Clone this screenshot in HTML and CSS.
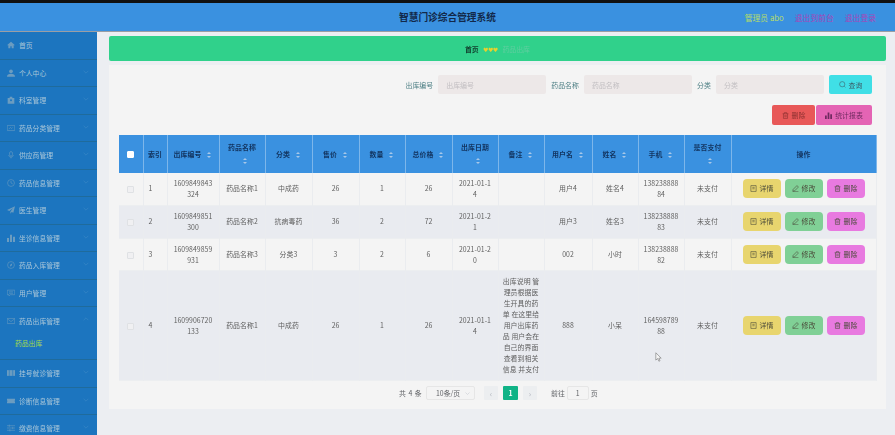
FILE: index.html
```html
<!DOCTYPE html>
<html lang="zh-CN">
<head>
<meta charset="utf-8">
<title>智慧门诊综合管理系统</title>
<link rel="stylesheet" href="styles.css">
</head>
<body>
<svg class="sprite" aria-hidden="true">
  <symbol id="i-chev" viewBox="0 0 10 6"><path d="M1 1l4 4 4-4" fill="none" stroke="currentColor" stroke-width="1"/></symbol>
  <symbol id="i-home" viewBox="0 0 12 12"><path d="M6 1L0 6.500h2V11h3V8h2v3h3V6.500h2z" fill="currentColor"/></symbol>
  <symbol id="i-user" viewBox="0 0 12 12"><circle cx="6" cy="3.500" r="2.800" fill="currentColor"/><path d="M0 11.500c0-3.500 2.500-4.500 6-4.500s6 1 6 4.500z" fill="currentColor"/></symbol>
  <symbol id="i-case" viewBox="0 0 12 12"><path d="M1 3h3V1h4v2h3v8.500H1z" fill="currentColor"/><circle cx="6" cy="6.500" r="1.500" fill="#1c75bf"/></symbol>
  <symbol id="i-pic" viewBox="0 0 14 12"><path d="M.5 1.500h13v9H.5zM3 8l3-3 2 2 2-2" fill="none" stroke="currentColor"/></symbol>
  <symbol id="i-mic" viewBox="0 0 12 14"><rect x="3.500" y="1" width="5" height="8" rx="2.500" fill="none" stroke="currentColor"/><path d="M6 10v3M2 7c0 5 8 5 8 0" fill="none" stroke="currentColor"/></symbol>
  <symbol id="i-clock" viewBox="0 0 14 14"><circle cx="7" cy="7" r="6" fill="none" stroke="currentColor"/><path d="M7 3.500V7l3 1.500" fill="none" stroke="currentColor"/></symbol>
  <symbol id="i-send" viewBox="0 0 12 12"><path d="M12 .5L0 6l3.500 1.500L9 3 5 8.500v3L7 9l2.500 1z" fill="currentColor"/></symbol>
  <symbol id="i-bars" viewBox="0 0 12 12"><path d="M0 6h3v6H0zM4.500 1h3v11h-3zM9 4h3v8H9z" fill="currentColor"/></symbol>
  <symbol id="i-compass" viewBox="0 0 14 14"><circle cx="7" cy="7" r="6" fill="none" stroke="currentColor"/><path d="M9.500 4L8 8 5 10l1-4z" fill="currentColor"/></symbol>
  <symbol id="i-chat" viewBox="0 0 14 12"><path d="M.5 1h13v8H6L3.500 11V9h-3zM3.500 4h7M3.500 6.500h7" fill="none" stroke="currentColor"/></symbol>
  <symbol id="i-mail" viewBox="0 0 14 12"><path d="M.5 1.500h13v9H.5zM.5 2L7 7l6.500-5" fill="none" stroke="currentColor"/></symbol>
  <symbol id="i-film" viewBox="0 0 14 12"><path d="M0 1h14v10H0z" fill="currentColor"/><path d="M4 1v10M10 1v10" stroke="#1c75bf"/></symbol>
  <symbol id="i-ticket" viewBox="0 0 14 12"><path d="M0 2h14v3a1 1 0 0 0 0 2v3H0V7a1 1 0 0 0 0-2z" fill="currentColor"/></symbol>
  <symbol id="i-sliders" viewBox="0 0 14 12"><path d="M0 2h14M0 6h14M0 10h14M4 0v4M10 4v4M5 8v4" fill="none" stroke="currentColor"/></symbol>
  <symbol id="i-search" viewBox="0 0 12 12"><circle cx="5.500" cy="5.500" r="4.500" fill="none" stroke="currentColor"/><path d="M9 9l2 2" stroke="currentColor"/></symbol>
  <symbol id="i-trash" viewBox="0 0 12 12"><path d="M1 3h10M4 3V1h4v2M2.500 3v8h7V3M5 5v4M7 5v4" fill="none" stroke="currentColor"/></symbol>
  <symbol id="i-doc" viewBox="0 0 12 12"><path d="M1.500 1h9v10h-9zM4 4h4M4 6.500h4" fill="none" stroke="currentColor"/></symbol>
  <symbol id="i-pen" viewBox="0 0 12 12"><path d="M8.500 1L11 3.500 4.500 10 1.500 10.500 2 7.500zM1 11.500h10" fill="none" stroke="currentColor"/></symbol>
</svg>
<div class="app">
  <header class="topbar">
    <span></span>
    <h1 class="title">智慧门诊综合管理系统</h1>
    <div class="top-links">
      <span class="admin">管理员 abo</span>
      <a class="top-link">退出到前台</a>
      <a class="top-link">退出登录</a>
    </div>
  </header>
  <div class="body-row">
    <nav class="sidebar">
      <div class="nav-item"><svg class="nav-icon"><use href="#i-home"/></svg><span>首页</span></div>
      <div class="nav-item"><svg class="nav-icon"><use href="#i-user"/></svg><span>个人中心</span><svg class="chev"><use href="#i-chev"/></svg></div>
      <div class="nav-item"><svg class="nav-icon"><use href="#i-case"/></svg><span>科室管理</span><svg class="chev"><use href="#i-chev"/></svg></div>
      <div class="nav-item"><svg class="nav-icon"><use href="#i-pic"/></svg><span>药品分类管理</span><svg class="chev"><use href="#i-chev"/></svg></div>
      <div class="nav-item"><svg class="nav-icon"><use href="#i-mic"/></svg><span>供应商管理</span><svg class="chev"><use href="#i-chev"/></svg></div>
      <div class="nav-item"><svg class="nav-icon"><use href="#i-clock"/></svg><span>药品信息管理</span><svg class="chev"><use href="#i-chev"/></svg></div>
      <div class="nav-item"><svg class="nav-icon"><use href="#i-send"/></svg><span>医生管理</span><svg class="chev"><use href="#i-chev"/></svg></div>
      <div class="nav-item"><svg class="nav-icon"><use href="#i-bars"/></svg><span>坐诊信息管理</span><svg class="chev"><use href="#i-chev"/></svg></div>
      <div class="nav-item"><svg class="nav-icon"><use href="#i-compass"/></svg><span>药品入库管理</span><svg class="chev"><use href="#i-chev"/></svg></div>
      <div class="nav-item"><svg class="nav-icon"><use href="#i-chat"/></svg><span>用户管理</span><svg class="chev"><use href="#i-chev"/></svg></div>
      <div class="nav-group">
        <div class="nav-item nav-open"><svg class="nav-icon"><use href="#i-mail"/></svg><span>药品出库管理</span><svg class="chev chev-up"><use href="#i-chev"/></svg></div>
        <div class="nav-sub">药品出库</div>
      </div>
      <div class="nav-item"><svg class="nav-icon"><use href="#i-film"/></svg><span>挂号就诊管理</span><svg class="chev"><use href="#i-chev"/></svg></div>
      <div class="nav-item"><svg class="nav-icon"><use href="#i-ticket"/></svg><span>诊断信息管理</span><svg class="chev"><use href="#i-chev"/></svg></div>
      <div class="nav-item"><svg class="nav-icon"><use href="#i-sliders"/></svg><span>缴费信息管理</span><svg class="chev"><use href="#i-chev"/></svg></div>
    </nav>
    <main class="main">
      <div class="crumb">
        <b class="crumb-home">首页</b>
        <span class="hearts">♥♥♥</span>
        <span class="crumb-cur">药品出库</span>
      </div>
      <section class="card">
        <form class="search">
          <label class="s-label">出库编号</label><input class="s-input" placeholder="出库编号">
          <label class="s-label">药品名称</label><input class="s-input" placeholder="药品名称">
          <label class="s-label">分类</label><input class="s-input" placeholder="分类">
          <button type="button" class="btn btn-query"><svg class="b-icon"><use href="#i-search"/></svg>查询</button>
        </form>
        <div class="actions">
          <button type="button" class="btn btn-del"><svg class="b-icon"><use href="#i-trash"/></svg>删除</button>
          <button type="button" class="btn btn-stat"><svg class="b-icon"><use href="#i-bars"/></svg>统计报表</button>
        </div>
        <table class="grid">
          <colgroup>
            <col class="w24"><col class="w24"><col class="w52"><col class="w46"><col class="w47"><col class="w47"><col class="w46"><col class="w47"><col class="w46"><col class="w46"><col class="w48"><col class="w46"><col class="w46"><col class="w47"><col class="w145">
          </colgroup>
          <thead>
            <tr>
              <th class="tight"><span class="cbx cbx-on"></span></th>
              <th class="tight">索引</th>
              <th>出库编号<i class="sort"></i></th>
              <th>药品名称<i class="sort"></i></th>
              <th>分类<i class="sort"></i></th>
              <th>售价<i class="sort"></i></th>
              <th>数量<i class="sort"></i></th>
              <th>总价格<i class="sort"></i></th>
              <th>出库日期<i class="sort"></i></th>
              <th>备注<i class="sort"></i></th>
              <th>用户名<i class="sort"></i></th>
              <th>姓名<i class="sort"></i></th>
              <th>手机<i class="sort"></i></th>
              <th>是否支付<i class="sort"></i></th>
              <th>操作</th>
            </tr>
          </thead>
          <tbody>
            <tr>
              <td class="tight"><span class="cbx"></span></td><td class="idx">1</td><td>1609849843324</td><td>药品名称1</td><td>中成药</td><td>26</td><td>1</td><td>26</td><td>2021-01-14</td><td></td><td>用户4</td><td>姓名4</td><td>13823888884</td><td>未支付</td>
              <td><div class="ops"><button type="button" class="op op-view"><svg class="b-icon"><use href="#i-doc"/></svg>详情</button><button type="button" class="op op-edit"><svg class="b-icon"><use href="#i-pen"/></svg>修改</button><button type="button" class="op op-del"><svg class="b-icon"><use href="#i-trash"/></svg>删除</button></div></td>
            </tr>
            <tr>
              <td class="tight"><span class="cbx"></span></td><td class="idx">2</td><td>1609849851300</td><td>药品名称2</td><td>抗病毒药</td><td>36</td><td>2</td><td>72</td><td>2021-01-21</td><td></td><td>用户3</td><td>姓名3</td><td>13823888883</td><td>未支付</td>
              <td><div class="ops"><button type="button" class="op op-view"><svg class="b-icon"><use href="#i-doc"/></svg>详情</button><button type="button" class="op op-edit"><svg class="b-icon"><use href="#i-pen"/></svg>修改</button><button type="button" class="op op-del"><svg class="b-icon"><use href="#i-trash"/></svg>删除</button></div></td>
            </tr>
            <tr>
              <td class="tight"><span class="cbx"></span></td><td class="idx">3</td><td>1609849859931</td><td>药品名称3</td><td>分类3</td><td>3</td><td>2</td><td>6</td><td>2021-01-20</td><td></td><td>002</td><td>小时</td><td>13823888882</td><td>未支付</td>
              <td><div class="ops"><button type="button" class="op op-view"><svg class="b-icon"><use href="#i-doc"/></svg>详情</button><button type="button" class="op op-edit"><svg class="b-icon"><use href="#i-pen"/></svg>修改</button><button type="button" class="op op-del"><svg class="b-icon"><use href="#i-trash"/></svg>删除</button></div></td>
            </tr>
            <tr>
              <td class="tight"><span class="cbx"></span></td><td class="idx">4</td><td>1609906720133</td><td>药品名称1</td><td>中成药</td><td>26</td><td>1</td><td>26</td><td>2021-01-14</td><td class="note">出库说明 管理员根据医生开具的药单 在这里给用户出库药品 用户会在自己的界面查看到相关信息 并支付</td><td>888</td><td>小呆</td><td>16459878988</td><td>未支付</td>
              <td><div class="ops"><button type="button" class="op op-view"><svg class="b-icon"><use href="#i-doc"/></svg>详情</button><button type="button" class="op op-edit"><svg class="b-icon"><use href="#i-pen"/></svg>修改</button><button type="button" class="op op-del"><svg class="b-icon"><use href="#i-trash"/></svg>删除</button></div></td>
            </tr>
          </tbody>
        </table>
        <div class="pager">
          <span class="total">共 4 条</span>
          <span class="size">10条/页<svg class="size-chev"><use href="#i-chev"/></svg></span>
          <span class="page page-off">‹</span>
          <span class="page page-on">1</span>
          <span class="page page-off">›</span>
          <span class="goto">前往</span>
          <span class="goto-box">1</span>
          <span class="goto-end">页</span>
        </div>
      </section>
    </main>
  </div>
  <svg class="cursor" viewBox="0 0 9 13"><path d="M1 1v9.500l2.500-2 1.500 3.500 1.500-.7L5 8h3z" fill="#f4f4f4" stroke="#777" stroke-width=".8"/></svg>
</div>
</body>
</html>
```

FILE: styles.css
```css
* { box-sizing: border-box; }
html, body { margin: 0; height: 100%; overflow: hidden; background: #eceef2; }
body { font-family: "Noto Sans CJK SC", "Noto Sans", sans-serif; font-size: 6.9px; color: #666; }
.sprite { position: absolute; width: 0; height: 0; }
.app { height: 435px; display: flex; flex-direction: column; border-top: 3px solid #111; filter: blur(.5px); }

.topbar { height: 29px; flex: none; display: grid; grid-template-columns: 1fr auto 1fr; align-items: center; background: #3a91e0; border-bottom: 1px solid #9a9ea4; padding: 0 19px; }
.title { margin: 0; font-size: 9.700px; font-weight: 700; color: #12294a; }
.top-links { display: flex; justify-content: flex-end; gap: 11px; font-size: 7.800px; }
.admin { color: #b6dc68; }
.top-link { color: #a646b8; }

.body-row { flex: 1; display: flex; min-height: 0; }
.sidebar { width: 97px; flex: none; background: #1c75bf; overflow: hidden; color: #a9c6d8; font-size: 6.800px; }
.nav-item { height: 27.500px; display: flex; align-items: center; padding-left: 7px; border-bottom: 1px solid #1f6b9c; position: relative; }
.nav-open { border-bottom: 0; }
.nav-group { border-bottom: 1px solid #1f6b9c; }
.nav-icon { width: 8px; height: 8px; margin-right: 4px; color: #6b9cc0; flex: none; }
.chev { position: absolute; right: 8px; top: 10px; width: 6px; height: 4px; color: #3f8cc8; }
.chev-up { transform: rotate(180deg); }
.nav-sub { height: 24.500px; padding: 3px 0 0 15px; color: #a6d94e; }

.main { flex: 1; min-width: 0; padding: 4px 9px 0 12px; }
.crumb { height: 25px; background: #30d18b; border-radius: 2px; display: flex; align-items: center; justify-content: center; gap: 4.500px; }
.crumb-home { color: #12402f; }
.hearts { color: #e9d22c; font-size: 5px; letter-spacing: -.1px; }
.crumb-cur { color: #5fce9f; }

.card { margin-top: 4px; height: 344px; background: #f4f4f4; padding: 10px 10px 0; }
.search { display: flex; justify-content: flex-end; align-items: center; padding-right: 4px; height: 19px; }
.s-label { color: #4d7f84; margin-right: 5.200px; }
.s-input { width: 108px; height: 19px; border: 0; border-radius: 2px; background: #ede8e8; padding: 0 8px; margin-right: 5px; font: inherit; }
.s-input::placeholder { color: #c2bfc2; opacity: 1; }
.btn { border: 0; height: 20px; font: inherit; color: #555; display: inline-flex; align-items: center; justify-content: center; border-radius: 2px; padding: 0; }
.b-icon { width: 7px; height: 7px; margin-right: 3px; flex: none; }
.btn-query { width: 43px; height: 19px; background: #40dfe6; color: #3c5f6a; }
.actions { display: flex; justify-content: flex-end; padding-right: 4px; margin-top: 11px; gap: 1px; }
.btn-del { width: 43px; background: #e85858; color: #8a3030; }
.btn-stat { width: 56px; background: #e464b4; color: #6f2a60; }

.grid { margin-top: 10px; width: 757px; table-layout: fixed; border-collapse: collapse; letter-spacing: .05px; }
.w24 { width: 24px; } .w46 { width: 46px; } .w47 { width: 47px; } .w48 { width: 48px; } .w52 { width: 52px; } .w145 { width: 145px; }
.grid th { height: 38px; background: #3a91e0; color: #12335e; font-weight: 700; line-height: 13px; padding: 0 5px; border-right: 1px solid #7db6ea; text-align: center; }
.grid td { padding: 5px; line-height: 10.900px; text-align: center; word-break: break-all; border-right: 1px solid #eaecef; color: #606060; }
.grid th.tight, .grid td.tight { padding: 0 3px; }
.grid td.idx { padding: 0 0 0 5px; text-align: left; }
.grid td.note { padding: 5px 4px; }
.grid tbody tr:nth-child(odd) td { background: #f4f4f4; }
.grid tbody tr:nth-child(even) td { background: #e9ebf0; }
.grid tbody tr { border-bottom: 1px solid #eceef0; }
.sort { display: inline-block; width: 5px; height: 6px; margin-left: 3px; vertical-align: -1px; position: relative; box-sizing: content-box; border-left: 3px solid transparent; }
.sort::before, .sort::after { content: ""; position: absolute; left: 0; border-left: 2.500px solid transparent; border-right: 2.500px solid transparent; }
.sort::before { top: 0; border-bottom: 2.500px solid #a8c8e8; }
.sort::after { bottom: 0; border-top: 2.500px solid #a8c8e8; }
.cbx { display: inline-block; width: 7px; height: 7px; background: #f0f0f2; border: 1px solid #dfe1e4; border-radius: 1px; vertical-align: middle; }
.cbx-on { background: #fff; border-color: #fff; }
.ops { display: flex; justify-content: center; gap: 4px; }
.op { width: 38px; height: 19px; border: 0; border-radius: 4px; font: inherit; color: #4a4a3a; display: inline-flex; align-items: center; justify-content: center; padding: 0; }
.op-view { background: #e8d56e; }
.op-edit { background: #80d096; }
.op-del { background: #e87ae0; }

.pager { height: 25px; display: flex; align-items: center; color: #606266; padding-left: 280px; }
.total { width: 27px; word-spacing: 1px; }
.size { width: 49px; height: 14px; border: 1px solid #e6e6e6; border-radius: 2px; display: flex; align-items: center; justify-content: space-between; padding: 0 4px 0 9px; margin-right: 9px; }
.size-chev { width: 5px; height: 3px; color: #c0c4cc; }
.page { width: 14px; height: 14px; display: flex; align-items: center; justify-content: center; border-radius: 1px; margin-right: 5px; }
.page-off { background: #eceef0; color: #b0b4bc; font-size: 8px; }
.page-on { background: #10b386; color: #fff; font-weight: 700; width: 15px; }
.goto { margin-left: 9px; margin-right: 2px; }
.goto-box { width: 22px; height: 14px; border: 1px solid #e6e6e6; border-radius: 2px; display: flex; align-items: center; justify-content: center; margin-right: 2px; }

.cursor { position: absolute; left: 655px; top: 349px; width: 7px; height: 10px; }
```
